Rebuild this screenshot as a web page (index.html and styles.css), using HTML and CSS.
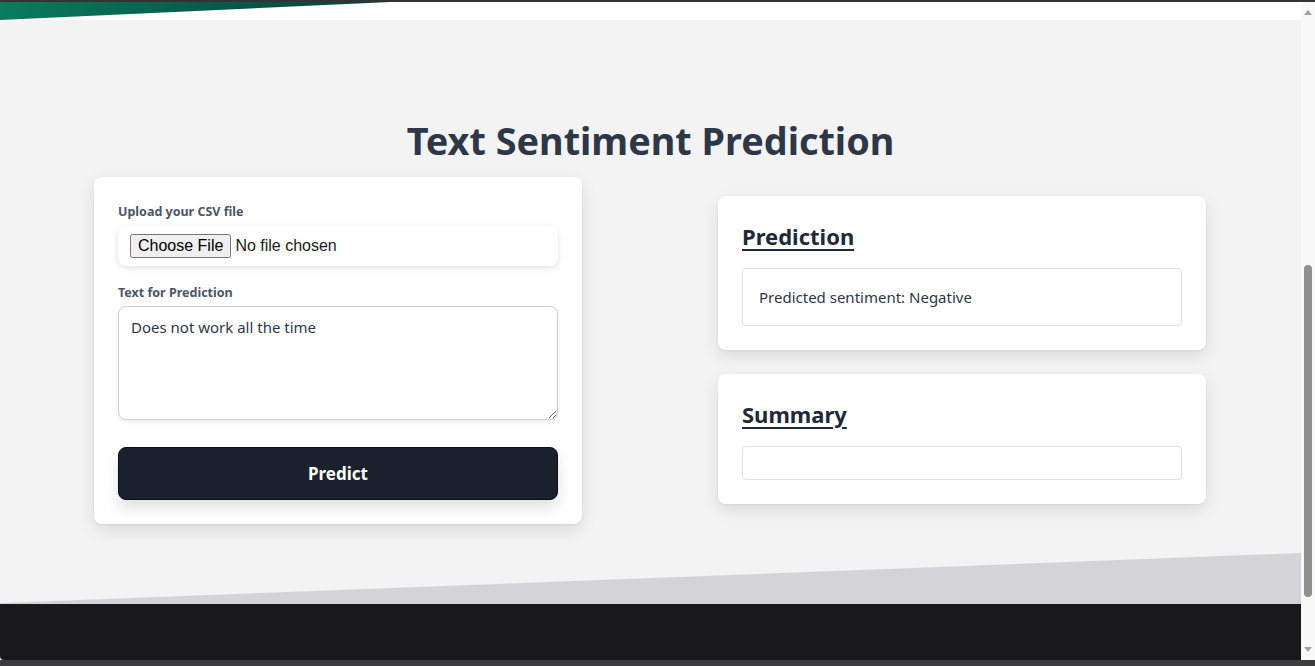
FILE: index.html
```html
<!DOCTYPE html>
<html lang="en">
<head>
<meta charset="utf-8">
<title>Text Sentiment Prediction</title>
<link rel="stylesheet" href="styles.css">
</head>
<body>
<div class="frame-top"></div>
<div class="viewport">
  <div class="page">
    <div class="top-strip">
      <svg class="top-slant" width="1301" height="18" viewBox="0 0 1301 18" preserveAspectRatio="none">
        <defs>
          <linearGradient id="g1" x1="0" y1="0" x2="1" y2="0">
            <stop offset="0" stop-color="#0a7b5d"/>
            <stop offset="1" stop-color="#04403a"/>
          </linearGradient>
        </defs>
        <polygon points="0,0 390,0 0,18" fill="url(#g1)"/>
      </svg>
    </div>
    <main class="main">
      <h1 class="title">Text Sentiment Prediction</h1>
      <div class="columns">
        <section class="card form-card">
          <label class="label" for="csv">Upload your CSV file</label>
          <div class="file-box">
            <input id="csv" class="file-input" type="file">
          </div>
          <label class="label label-2" for="txt">Text for Prediction</label>
          <textarea id="txt" class="textarea">Does not work all the time</textarea>
          <button class="predict">Predict</button>
        </section>
        <div class="results">
          <section class="card result-card">
            <h2 class="result-title">Prediction</h2>
            <div class="result-box">Predicted sentiment: Negative</div>
          </section>
          <section class="card result-card">
            <h2 class="result-title">Summary</h2>
            <div class="result-box empty"></div>
          </section>
        </div>
      </div>
    </main>
    <div class="bottom-slant">
      <svg width="1301" height="51" viewBox="0 0 1301 51" preserveAspectRatio="none">
        <polygon points="0,50 1301,0 1301,51 0,51" fill="#d4d3d8"/>
      </svg>
    </div>
    <footer class="footer"></footer>
  </div>
  <div class="scrollbar">
    <div class="arrow up"></div>
    <div class="track"><div class="thumb"></div></div>
    <div class="arrow down"></div>
  </div>
</div>
<div class="frame-bottom"></div>
</body>
</html>
```

FILE: styles.css
```css
* { box-sizing: border-box; }
html, body { margin: 0; padding: 0; }
body {
  width: 1315px;
  height: 666px;
  overflow: hidden;
  background: #3a3a3a;
  font-family: "Noto Sans", "Open Sans", sans-serif;
  color: #2d3748;
}
.frame-top { height: 2px; background: #333333; }
.frame-bottom { height: 6px; background: #3c3c3c; }
.viewport {
  display: flex;
  height: 658px;
}
.page {
  width: 1301px;
  display: flex;
  flex-direction: column;
  background: #f3f3f3;
}
.top-strip {
  height: 18px;
  background: #ffffff;
  flex: none;
}
.top-slant { display: block; }
.main {
  height: 533px;
  flex: none;
  padding-top: 97px;
}
.title {
  margin: 0 0 12px;
  text-align: center;
  font-size: 37.8px;
  line-height: 48px;
  font-weight: 700;
  color: #2d3748;
}
.columns {
  display: flex;
  justify-content: center;
  align-items: center;
  gap: 136px;
  padding-right: 1px;
}
.card {
  width: 488px;
  background: #ffffff;
  border-radius: 8px;
  box-shadow: 0 6px 16px rgba(0,0,0,0.10), 0 1px 3px rgba(0,0,0,0.05);
  padding: 24px;
}
.form-card { display: flex; flex-direction: column; }
.label {
  font-size: 12.5px;
  line-height: 20px;
  font-weight: 700;
  color: #4a5568;
  padding-top: 1px;
  margin-bottom: 4px;
}
.label-2 { margin-top: 16px; margin-bottom: 3px; }
.file-box {
  height: 40px;
  background: #fff;
  border-radius: 8px;
  box-shadow: 0 2px 6px rgba(0,0,0,0.12);
  display: flex;
  align-items: center;
  padding: 0 12px;
}
.file-input {
  font-family: "Liberation Sans", Arial, sans-serif;
  font-size: 16px;
  color: #1a1a1a;
}
.textarea {
  height: 114px;
  border: 1px solid #cfcfcf;
  border-radius: 8px;
  padding: 9px 12px;
  font-family: "Noto Sans", "Open Sans", sans-serif;
  font-size: 15px;
  line-height: 22px;
  color: #2d3748;
  resize: vertical;
  box-shadow: 0 2px 4px rgba(0,0,0,0.08);
}
.predict {
  margin-top: 27px;
  height: 53px;
  background: #1a202c;
  color: #ffffff;
  border: 1px solid #0d0f14;
  border-radius: 8px;
  font-family: "Noto Sans", "Open Sans", sans-serif;
  font-size: 17px;
  font-weight: 700;
  box-shadow: 0 8px 14px rgba(0,0,0,0.12);
}
.results {
  display: flex;
  flex-direction: column;
  gap: 24px;
  margin-top: -1px;
}
.result-title {
  margin: 0 0 16px;
  font-size: 22px;
  line-height: 32px;
  font-weight: 700;
  color: #1f2937;
  text-decoration: underline;
  text-underline-offset: 4px;
  text-decoration-thickness: 2px;
}
.result-box {
  border: 1px solid #e2e2e2;
  border-radius: 4px;
  padding: 16px;
  font-size: 15px;
  line-height: 24px;
  color: #2d3748;
}
.result-box.empty { height: 34px; padding: 0; }
.bottom-slant { height: 51px; flex: none; }
.bottom-slant svg { display: block; }
.footer {
  flex: 1;
  background: #19191b;
  border-bottom-left-radius: 4px;
}
.scrollbar {
  width: 14px;
  background: #f9f9f9;
  display: flex;
  flex-direction: column;
  align-items: center;
}
.arrow {
  width: 0; height: 0;
  border-left: 4px solid transparent;
  border-right: 4px solid transparent;
}
.arrow.up { border-bottom: 5px solid #a3a3a3; margin-top: 8px; }
.arrow.down { border-top: 5px solid #a3a3a3; margin-bottom: 8px; }
.track { flex: 1; width: 100%; display: flex; justify-content: center; }
.thumb {
  width: 8px;
  height: 332px;
  margin-top: 250px;
  background: #8f8f8f;
  border-radius: 4px;
}
```
